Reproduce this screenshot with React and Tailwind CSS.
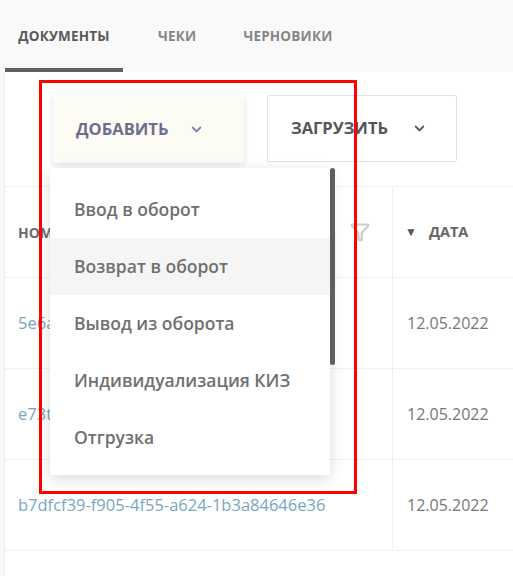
import React from "react";
import { ChevronDown, Filter } from "lucide-react";

const items = [
  "Ввод в оборот",
  "Возврат в оборот",
  "Вывод из оборота",
  "Индивидуализация КИЗ",
  "Отгрузка",
];

const rows = [
  { id: "5e6a", date: "12.05.2022" },
  { id: "e73t", date: "12.05.2022" },
  { id: "b7dfcf39-f905-4f55-a624-1b3a84646e36", date: "12.05.2022" },
];

export default function App() {
  return (
    <div className="relative w-[513px] h-[576px] overflow-hidden bg-[#f9f9f9] font-['Open_Sans',sans-serif]">
      {/* Tabs */}
      <div className="flex h-[72px] items-stretch pl-[5px]">
        <div className="w-[118px] flex items-center justify-center border-b-[4px] border-[#5f5f5f] pt-[4px]">
          <span className="text-[13.5px] font-bold text-[#5a5a5a] tracking-[0.2px]">ДОКУМЕНТЫ</span>
        </div>
        <div className="ml-[35px] flex items-center border-b-[4px] border-transparent pt-[4px]">
          <span className="text-[13.5px] font-bold text-[#858585] tracking-[0.2px]">ЧЕКИ</span>
        </div>
        <div className="ml-[47px] flex items-center border-b-[4px] border-transparent pt-[4px]">
          <span className="text-[13.5px] font-bold text-[#858585] tracking-[0.2px]">ЧЕРНОВИКИ</span>
        </div>
      </div>

      {/* Content panel */}
      <div className="ml-[4px] bg-white border-l border-[#ececec] h-[504px]">
        <div className="flex gap-[23px] pl-[48px] pt-[23px] h-[114px]">
          <div className="w-[191px] h-[68px] bg-[#fdfcf4] shadow-[0_2px_6px_rgba(0,0,0,0.12)] rounded-[2px] flex items-center pl-[23px] gap-[21px]">
            <span className="text-[16.5px] font-bold text-[#6d6d8f]">ДОБАВИТЬ</span>
            <ChevronDown size={15} strokeWidth={3.2} className="text-[#7b7ba6]" />
          </div>
          <div className="w-[190px] h-[67px] bg-white border border-[#e2e2e2] rounded-[2px] flex items-center pl-[23px] gap-[24px]">
            <span className="text-[16.5px] font-bold text-[#555]">ЗАГРУЗИТЬ</span>
            <ChevronDown size={15} strokeWidth={3.2} className="text-[#555]" />
          </div>
        </div>

        {/* Table */}
        <div className="border-t border-[#f0f0f0]">
          <div className="flex h-[91px] border-b border-[#f0f0f0]">
            <div className="w-[388px] border-r border-[#f0f0f0] flex items-center pl-[13px] pr-[22px]">
              <span className="text-[14px] font-bold text-[#6a6a6a]">НОМЕР</span>
              <div className="flex-1" />
              <Filter size={20} strokeWidth={2.6} className="text-[#cbcbcb]" />
            </div>
            <div className="flex-1 flex items-center pl-[12px] gap-[12px]">
              <span className="text-[12px] text-[#555] leading-none">▼</span>
              <span className="text-[14.5px] font-bold text-[#666]">ДАТА</span>
            </div>
          </div>
          {rows.map((r, i) => (
            <div key={i} className="flex h-[91px] border-b border-[#f0f0f0]">
              <div className="w-[388px] border-r border-[#f0f0f0] flex items-center pl-[13px]">
                <span className="text-[16.5px] text-[#7aa6c2]">{r.id}</span>
              </div>
              <div className="flex-1 flex items-center pl-[14px]">
                <span className="text-[16px] text-[#777]">{r.date}</span>
              </div>
            </div>
          ))}
        </div>
      </div>

      {/* Dropdown menu */}
      <div className="absolute left-[50px] top-[168px] w-[286px] h-[307px] flex">
        <div className="w-[280px] h-full bg-white shadow-[0_4px_14px_rgba(0,0,0,0.14)] pt-[13px]">
          {items.map((t, i) => (
            <div
              key={i}
              className={
                "h-[57px] flex items-center pl-[24px] " +
                (i === 1 ? "bg-[#f5f5f5]" : "")
              }
            >
              <span className="text-[17.5px] font-semibold text-[#707070]">{t}</span>
            </div>
          ))}
        </div>
        <div className="w-[6px] h-full">
          <div className="w-[5px] h-[197px] bg-[#5e5e5e] rounded-full" />
        </div>
      </div>

      {/* Annotation box */}
      <div className="absolute left-[39px] top-[80px] w-[318px] h-[414px] border-[3px] border-[#ff0000]" />
    </div>
  );
}
